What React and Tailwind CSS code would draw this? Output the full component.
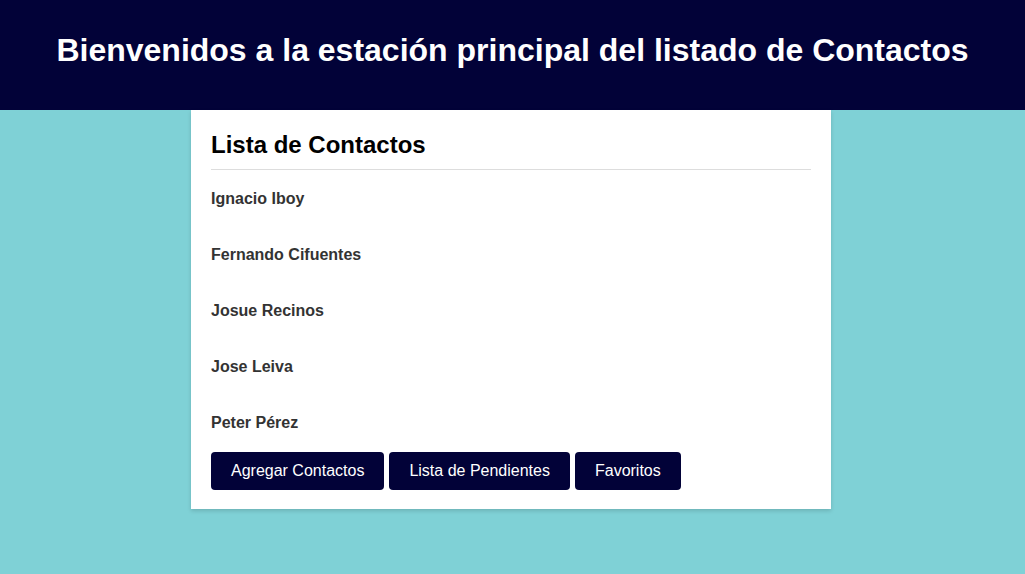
import React from "react";

const contacts = [
    "Ignacio Iboy",
    "Fernando Cifuentes",
    "Josue Recinos",
    "Jose Leiva",
    "Peter Pérez",
];

const buttons = ["Agregar Contactos", "Lista de Pendientes", "Favoritos"];

const App = () => {
    return (
        <div
            className="min-h-[574px] bg-[#7fd1d6]"
            style={{ fontFamily: '"Liberation Sans", Arial, sans-serif' }}
        >
            {/* Header */}
            <header className="h-[110px] bg-[#020238] flex items-center justify-center">
                <h1 className="text-[32px] font-bold text-white pb-[10px]">
                    Bienvenidos a la estación principal del listado de Contactos
                </h1>
            </header>

            {/* Contact card */}
            <div className="w-[640px] ml-[191px] bg-white px-[20px] pt-[21px] pb-[19px] shadow-[0_2px_4px_rgba(0,0,0,0.15)]">
                <h2 className="text-[24px] font-bold text-black leading-[28px] pb-[10px] border-b border-[#dddddd]">
                    Lista de Contactos
                </h2>

                <ul className="flex flex-col gap-[38px] pt-[20px]">
                    {contacts.map((name) => (
                        <li
                            key={name}
                            className="text-[16px] font-bold text-[#333333] leading-[18px]"
                        >
                            {name}
                        </li>
                    ))}
                </ul>

                <div className="flex gap-[5px] mt-[20px]">
                    {buttons.map((label) => (
                        <button
                            key={label}
                            className="h-[38px] px-[20px] bg-[#020238] text-white text-[16px] rounded-[4px]"
                        >
                            {label}
                        </button>
                    ))}
                </div>
            </div>
        </div>
    );
};

export default App;
